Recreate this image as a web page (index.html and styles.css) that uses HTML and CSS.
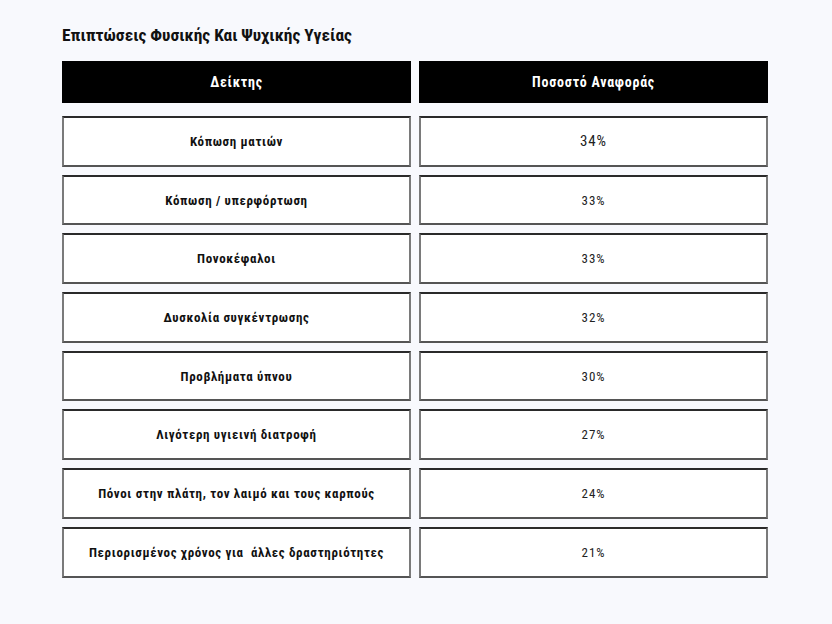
FILE: index.html
```html
<!DOCTYPE html>
<html lang="el">
<head>
<meta charset="utf-8">
<link rel="stylesheet" href="styles.css">
</head>
<body>
<main class="page">
  <h1 class="title">Επιπτώσεις Φυσικής Και Ψυχικής Υγείας</h1>
  <div class="table">
    <div class="head">Δείκτης</div>
    <div class="head">Ποσοστό Αναφοράς</div>
    <div class="cell label">Κόπωση ματιών</div>
    <div class="cell value big">34%</div>
    <div class="cell label">Κόπωση / υπερφόρτωση</div>
    <div class="cell value">33%</div>
    <div class="cell label">Πονοκέφαλοι</div>
    <div class="cell value">33%</div>
    <div class="cell label">Δυσκολία συγκέντρωσης</div>
    <div class="cell value">32%</div>
    <div class="cell label">Προβλήματα ύπνου</div>
    <div class="cell value">30%</div>
    <div class="cell label">Λιγότερη υγιεινή διατροφή</div>
    <div class="cell value">27%</div>
    <div class="cell label">Πόνοι στην πλάτη, τον λαιμό και τους καρπούς</div>
    <div class="cell value">24%</div>
    <div class="cell label">Περιορισμένος χρόνος για &nbsp;άλλες δραστηριότητες</div>
    <div class="cell value">21%</div>
  </div>
</main>
</body>
</html>
```
FILE: styles.css
```css
html, body {
  margin: 0;
  padding: 0;
  background: #f8f9fd;
}
body {
  font-family: Roboto, "Liberation Sans", sans-serif;
  font-stretch: 80%;
  color: #111;
}
.page {
  padding: 24px 64px 0 62px;
}
.title {
  margin: 0 0 15px 0;
  font-size: 17.4px;
  font-weight: 700;
  color: #111;
  line-height: 22px;
  letter-spacing: 0;
}
.table {
  display: grid;
  grid-template-columns: 349px 349px;
  column-gap: 8px;
  row-gap: 8px;
  width: 706px;
}
.head {
  background: #000;
  color: #fff;
  height: 42px;
  display: flex;
  align-items: center;
  justify-content: center;
  font-weight: 700;
  font-size: 14px;
  letter-spacing: 0.75px;
  margin-bottom: 5px;
}
.cell {
  background: #fff;
  height: 46.7px;
  border: 2px solid #7a7a7a;
  border-top-color: #2a2a2a;
  border-bottom-color: #555;
  display: flex;
  align-items: center;
  justify-content: center;
  text-align: center;
  font-size: 13px;
  letter-spacing: 0.65px;
}
.label {
  font-weight: 700;
}
.value {
  font-weight: 400;
  color: #222;
  letter-spacing: 0.9px;
}
.value.big {
  font-size: 15px;
}
```
